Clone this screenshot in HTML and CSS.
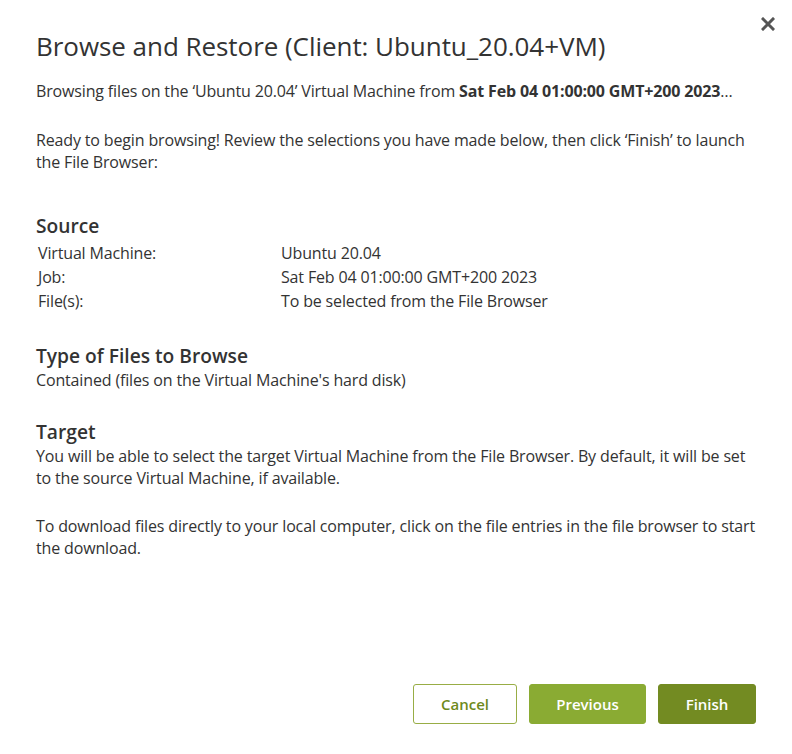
FILE: index.html
```html
<!DOCTYPE html>
<html>
<head>
<meta charset="utf-8">
<link rel="stylesheet" href="styles.css">
</head>
<body>
<div class="dialog">
  <button class="close" aria-label="Close">
    <svg width="14" height="14" viewBox="0 0 14 14"><path d="M2 2 L12 12 M12 2 L2 12" stroke="#555" stroke-width="3" stroke-linecap="square"/></svg>
  </button>
  <h1 class="title">Browse and Restore (Client: Ubuntu_20.04+VM)</h1>
  <p class="intro">Browsing files on the ‘Ubuntu 20.04’ Virtual Machine from <b>Sat Feb 04 01:00:00 GMT+200 2023</b>…</p>
  <p class="ready">Ready to begin browsing! Review the selections you have made below, then click ‘Finish’ to launch the File Browser:</p>

  <section class="sec source">
    <h2>Source</h2>
    <div class="grid">
      <div>Virtual Machine:</div><div>Ubuntu 20.04</div>
      <div>Job:</div><div>Sat Feb 04 01:00:00 GMT+200 2023</div>
      <div>File(s):</div><div>To be selected from the File Browser</div>
    </div>
  </section>

  <section class="sec type">
    <h2>Type of Files to Browse</h2>
    <p>Contained (files on the Virtual Machine's hard disk)</p>
  </section>

  <section class="sec target">
    <h2>Target</h2>
    <p>You will be able to select the target Virtual Machine from the File Browser. By default, it will be set to the source Virtual Machine, if available.</p>
    <p class="gap">To download files directly to your local computer, click on the file entries in the file browser to start the download.</p>
  </section>

  <div class="actions">
    <button class="btn cancel">Cancel</button>
    <button class="btn prev">Previous</button>
    <button class="btn finish">Finish</button>
  </div>
</div>
</body>
</html>
```

FILE: styles.css
```css
html, body {
  margin: 0;
  padding: 0;
  background: #fff;
}
body {
  font-family: "Open Sans", "Liberation Sans", sans-serif;
  color: #333;
  width: 792px;
  height: 754px;
  overflow: hidden;
}
.dialog {
  position: relative;
  padding: 30px 36px 0 36px;
  height: 754px;
  box-sizing: border-box;
  display: flex;
  flex-direction: column;
}
.close {
  position: absolute;
  top: 17px;
  right: 17px;
  border: 0;
  background: none;
  padding: 0;
  width: 14px;
  height: 14px;
  display: block;
}
.close svg { display: block; }
.title {
  font-size: 26px;
  font-weight: 400;
  line-height: 32px;
  margin: 0;
  letter-spacing: -0.05px;
}
p {
  margin: 0;
  font-size: 16px;
  line-height: 22px;
  letter-spacing: -0.15px;
}
.intro { margin-top: 18px; }
.ready { margin-top: 27px; }
h2 {
  font-size: 19.2px;
  font-weight: 600;
  line-height: 24px;
  margin: 0;
}
.source { margin-top: 41px; }
.source h2 { margin-bottom: 3px; }
.grid {
  display: grid;
  grid-template-columns: 243px 1fr;
  padding-left: 2px;
  font-size: 16px;
  line-height: 24px;
  letter-spacing: -0.15px;
}
.type { margin-top: 31px; }
.type h2, .target h2 { margin-bottom: 1px; }
.target { margin-top: 29px; }
.gap { margin-top: 26px; }
.actions {
  margin-top: auto;
  margin-bottom: 30px;
  display: flex;
  justify-content: flex-end;
  gap: 12px;
}
.btn {
  font-family: "Open Sans", "Liberation Sans", sans-serif;
  font-size: 15px;
  font-weight: 600;
  height: 40px;
  border-radius: 3px;
  border: 1px solid transparent;
  cursor: pointer;
  padding: 0;
}
.cancel {
  width: 104px;
  background: #fff;
  border-color: #98ad45;
  color: #6e8a1b;
}
.prev {
  width: 117px;
  background: #8aab33;
  border-color: #8aab33;
  color: #fff;
}
.finish {
  width: 98px;
  background: #738b22;
  border-color: #738b22;
  color: #fff;
}
```
